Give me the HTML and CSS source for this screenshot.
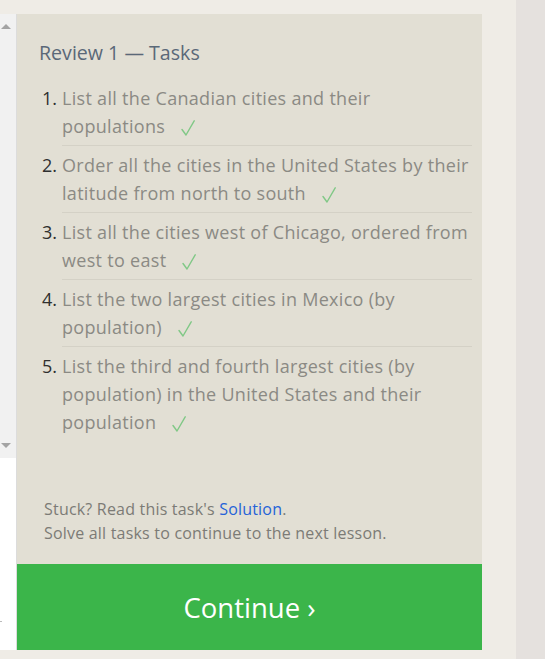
FILE: index.html
```html
<!DOCTYPE html>
<html>
<head>
<meta charset="utf-8">
<link rel="stylesheet" href="styles.css">
</head>
<body>
<div class="page">
  <div class="editor">
    <div class="scrollbar">
      <span class="arrow up"></span>
      <span class="arrow down"></span>
    </div>
    <div class="blank"><span class="tick"></span></div>
  </div>
  <div class="panel">
    <div class="tasks">
      <h2 class="title">Review 1 — Tasks</h2>
      <ol class="list">
        <li class="item"><span class="num">1.</span><span class="text">List all the Canadian cities and their populations<svg class="check" viewBox="0 0 14 16" width="14" height="16"><polyline points="1,9.5 5,15 13.2,0.8"/></svg></span></li>
        <li class="item"><span class="num">2.</span><span class="text">Order all the cities in the United States by their latitude from north to south<svg class="check" viewBox="0 0 14 16" width="14" height="16"><polyline points="1,9.5 5,15 13.2,0.8"/></svg></span></li>
        <li class="item"><span class="num">3.</span><span class="text">List all the cities west of Chicago, ordered from west to east<svg class="check" viewBox="0 0 14 16" width="14" height="16"><polyline points="1,9.5 5,15 13.2,0.8"/></svg></span></li>
        <li class="item"><span class="num">4.</span><span class="text">List the two largest cities in Mexico (by population)<svg class="check" viewBox="0 0 14 16" width="14" height="16"><polyline points="1,9.5 5,15 13.2,0.8"/></svg></span></li>
        <li class="item"><span class="num">5.</span><span class="text">List the third and fourth largest cities (by population) in the United States and their population<svg class="check" viewBox="0 0 14 16" width="14" height="16"><polyline points="1,9.5 5,15 13.2,0.8"/></svg></span></li>
      </ol>
      <div class="footer">
        <p>Stuck? Read this task's <a class="link" href="#">Solution</a>.</p>
        <p>Solve all tasks to continue to the next lesson.</p>
      </div>
    </div>
    <button class="continue">Continue ›</button>
  </div>
  <div class="gutter"></div>
  <div class="side"></div>
</div>
</body>
</html>
```
FILE: styles.css
```css
* { box-sizing: border-box; }
html, body { margin: 0; padding: 0; }
body {
  background: #efece6;
  font-family: "Open Sans", "Noto Sans", sans-serif;
  width: 545px;
  height: 659px;
  overflow: hidden;
}
.page {
  display: flex;
  height: 659px;
}
.editor {
  width: 17px;
  margin-top: 14px;
  height: 636px;
  display: flex;
  flex-direction: column;
  border-right: 1px solid #dcdcdc;
}
.scrollbar {
  height: 444px;
  background: #f1f1f1;
  display: flex;
  flex-direction: column;
  justify-content: space-between;
  align-items: flex-start;
  padding: 10px 0 10px 1px;
  width: 16px;
}
.arrow {
  width: 0; height: 0;
  border-left: 5px solid transparent;
  border-right: 5px solid transparent;
}
.arrow.up { border-bottom: 5px solid #a3a3a3; }
.arrow.down { border-top: 5px solid #a3a3a3; }
.blank {
  flex: 1;
  background: #fff;
  width: 16px;
  display: flex;
  align-items: flex-end;
  padding-bottom: 28px;
}
.tick { width: 2px; height: 1px; background: #bbb; }
.panel {
  width: 465px;
  margin-top: 14px;
  height: 636px;
  display: flex;
  flex-direction: column;
}
.tasks {
  flex: 1;
  background: #e2dfd4;
  padding: 25px 10px 0 22px;
  display: flex;
  flex-direction: column;
}
.title {
  margin: 0;
  font-size: 19.6px;
  font-weight: normal;
  color: #5a6878;
  line-height: 28px;
}
.list {
  list-style: none;
  margin: 12px 0 0 0;
  padding: 0;
}
.item {
  display: flex;
  font-size: 18px;
  letter-spacing: 0.3px;
  line-height: 28px;
}
.num {
  width: 24px;
  flex: none;
  text-align: right;
  padding: 5px 5px 5px 0;
  color: #2f2f2f;
  margin-left: -1px;
  letter-spacing: 0;
}
.text {
  color: #8b8a84;
  flex: 1;
  padding: 5px 0;
}
.item + .item .text { border-top: 1px solid #d4d1c6; }
.item + .item .num { border-top: 1px solid transparent; }
.check {
  display: inline-block;
  vertical-align: -3px;
  margin-left: 16px;
  fill: none;
  stroke: #80c886;
  stroke-width: 1.4;
  stroke-linecap: round;
  stroke-linejoin: round;
}
.footer {
  margin-top: auto;
  padding: 0 0 19px 5px;
  font-size: 16px;
  letter-spacing: 0.2px;
  line-height: 24px;
  color: #7c7b76;
}
.footer p { margin: 0; }
.link { color: #2563d8; text-decoration: none; }
.continue {
  height: 86px;
  border: none;
  background: #3bb54a;
  color: #fff;
  font-family: "Open Sans", "Noto Sans", sans-serif;
  font-size: 27.5px;
  padding: 0;
  width: 465px;
}
.gutter { width: 34px; }
.side { width: 29px; background: #e5e1de; }
```
